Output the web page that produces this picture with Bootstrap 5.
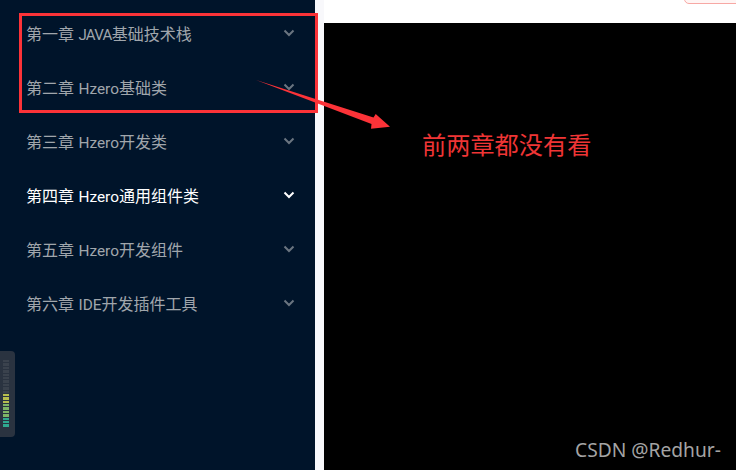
<!DOCTYPE html>
<html lang="zh">
<head>
<meta charset="utf-8">
<title>Hzero</title>
<link href="https://cdn.jsdelivr.net/npm/bootstrap@5.3.0/dist/css/bootstrap.min.css" rel="stylesheet">
<style>
html,body{height:470px;overflow:hidden;margin:0;background:#000}
.stage{position:relative;width:736px;height:470px;font-family:"Liberation Sans","Noto Sans CJK SC",sans-serif}
.side{width:315px;background:#00142a;padding-top:8px;flex:none}
.gutter{width:9px;background:#f8f8fb;flex:none}
.menu-row{height:54px;padding:0 20px 0 26px;color:#a0a6ac;font-size:16px;line-height:54px}
.menu-row.on{color:#fff}
.menu-row b{font-family:Roboto,sans-serif;font-weight:400;font-size:15.4px}
.menu-row b.caps{font-size:15px;letter-spacing:-.7px}
.menu-row svg{width:12px;height:8px;flex:none;margin-top:-4px}
.menu-row .chev{stroke:#6a7580}
.menu-row.on .chev{stroke:#fff}
.topbar{height:23px;background:#fff;position:relative}
.pill{position:absolute;right:-10px;top:-14px;width:62px;height:18px;border:1px solid #f7a8a4;border-radius:5px;background:#fff5f4}
.canvas{background:#000}
.frame{position:absolute;left:19px;top:13px;width:299px;height:100px;border:3px solid #fc3338}
.arrow{position:absolute;left:250px;top:75px;width:145px;height:60px}
.note{position:absolute;left:422px;top:130px;font-size:24.2px;line-height:32px;color:#ef3535;white-space:nowrap}
.mark-water{position:absolute;left:575px;top:437px;line-height:26px;color:#a4a4a4;white-space:nowrap;font-family:"Noto Sans",sans-serif;font-size:19.2px}
.meter{position:absolute;left:-4px;top:351px;width:19px;height:86px;background:#2a3340;border-radius:4px;padding:9px 4px 0 7px;gap:1px}
.meter i{display:block;height:2.4px;width:6px;background:#3a424d;flex:none}
.meter i.y{background:#b5bd4e}.meter i.g{background:#7fb566}.meter i.t{background:#2fa88f}
</style>
</head>
<body>
<div class="stage">
  <div class="d-flex h-100">
    <nav class="side">
      <div class="list-group">
        <div class="menu-row d-flex align-items-center justify-content-between"><span>第一章 <b class="caps">JAVA</b>基础技术栈</span><svg viewBox="0 0 12 8"><path class="chev" d="M1.5 1.5 6 6l4.5-4.5" fill="none" stroke-width="2"/></svg></div>
        <div class="menu-row d-flex align-items-center justify-content-between"><span>第二章 <b>Hzero</b>基础类</span><svg viewBox="0 0 12 8"><path class="chev" d="M1.5 1.5 6 6l4.5-4.5" fill="none" stroke-width="2"/></svg></div>
        <div class="menu-row d-flex align-items-center justify-content-between"><span>第三章 <b>Hzero</b>开发类</span><svg viewBox="0 0 12 8"><path class="chev" d="M1.5 1.5 6 6l4.5-4.5" fill="none" stroke-width="2"/></svg></div>
        <div class="menu-row on d-flex align-items-center justify-content-between"><span>第四章 <b>Hzero</b>通用组件类</span><svg viewBox="0 0 12 8"><path class="chev" d="M1.5 1.5 6 6l4.5-4.5" fill="none" stroke-width="2"/></svg></div>
        <div class="menu-row d-flex align-items-center justify-content-between"><span>第五章 <b>Hzero</b>开发组件</span><svg viewBox="0 0 12 8"><path class="chev" d="M1.5 1.5 6 6l4.5-4.5" fill="none" stroke-width="2"/></svg></div>
        <div class="menu-row d-flex align-items-center justify-content-between"><span>第六章 <b>IDE</b>开发插件工具</span><svg viewBox="0 0 12 8"><path class="chev" d="M1.5 1.5 6 6l4.5-4.5" fill="none" stroke-width="2"/></svg></div>
      </div>
    </nav>
    <div class="gutter"></div>
    <main class="flex-grow-1 d-flex flex-column overflow-hidden">
      <div class="topbar"><span class="pill"></span></div>
      <div class="canvas flex-grow-1"></div>
    </main>
  </div>

  <div class="frame"></div>
  <svg class="arrow" viewBox="250 75 145 60"><polygon fill="#fc3338" points="256,80 373.5,117.5 375.7,114 390,126.7 371,128.7 371.5,124"/></svg>
  <div class="note">前两章都没有看</div>
  <div class="mark-water">CSDN @Redhur-</div>
  <div class="meter d-flex flex-column">
    <i></i><i></i><i></i><i></i><i></i><i></i><i></i><i></i><i></i><i></i>
    <i class="y"></i><i class="y"></i><i class="y"></i><i class="g"></i><i class="g"></i><i class="g"></i><i class="g"></i><i class="t"></i><i class="t"></i><i class="t"></i>
  </div>
</div>
<script src="https://cdn.jsdelivr.net/npm/bootstrap@5.3.0/dist/js/bootstrap.bundle.min.js"></script>
</body>
</html>
